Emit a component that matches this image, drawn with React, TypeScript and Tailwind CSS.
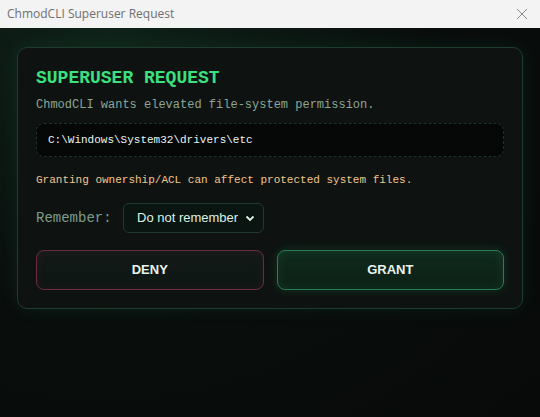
import React from "react";

export default function App() {
  const mono = { fontFamily: '"Liberation Mono", "DejaVu Sans Mono", monospace' };
  return (
    <div className="w-[540px] h-[417px] flex flex-col overflow-hidden" style={{ fontFamily: '"Liberation Sans", Arial, sans-serif' }}>
      <div className="h-[28px] bg-[#f3f3f3] flex items-center justify-between pl-[7px] pr-[10px] shrink-0">
        <span className="text-[12px] text-[#6f6f6f]" style={{ fontFamily: '"Open Sans", "Liberation Sans", sans-serif' }}>ChmodCLI Superuser Request</span>
        <svg width="12" height="12" viewBox="0 0 12 12" className="mr-[2px]">
          <path d="M1 1 L11 11 M11 1 L1 11" stroke="#8a8a8a" strokeWidth="1" />
        </svg>
      </div>
      <div className="flex-1 bg-[radial-gradient(ellipse_at_20%_0%,#0f2219_0%,#090d0c_55%,#070a09_100%)] pt-[19px] px-[17px]">
        <div className="rounded-[10px] border border-[#1d3d2e] bg-[#0e1311] shadow-[0_0_18px_rgba(40,160,100,0.12)] p-[18px] flex flex-col">
          <div className="text-[18px] leading-[24px] font-bold text-[#3ce07f]" style={mono}>SUPERUSER REQUEST</div>
          <div className="mt-[6px] text-[12px] leading-[18px] text-[#8da597]" style={mono}>ChmodCLI wants elevated file-system permission.</div>
          <div className="mt-[9px] h-[34px] rounded-[8px] border border-dashed border-[#1c3327] bg-[#050807] flex items-center pl-[11px]">
            <span className="text-[11px] text-[#eaf5ef]" style={mono}>C:\Windows\System32\drivers\etc</span>
          </div>
          <div className="mt-[14px] text-[11px] leading-[19px] text-[#f2c48d]" style={mono}>Granting ownership/ACL can affect protected system files.</div>
          <div className="mt-[13px] flex items-center gap-[9px]">
            <span className="text-[14px] text-[#7d9c8c] w-[78px]" style={mono}>Remember:</span>
            <div className="w-[141px] h-[30px] rounded-[6px] border border-[#1f3a2c] bg-[#0a1410] flex items-center justify-between pl-[13px] pr-[8px]">
              <span className="text-[13px] text-[#dcf3e5]">Do not remember</span>
              <svg width="10" height="10" viewBox="0 0 10 10">
                <path d="M1.5 3.5 L5 7 L8.5 3.5" stroke="#dcf3e5" strokeWidth="1.8" fill="none" />
              </svg>
            </div>
          </div>
          <div className="mt-[17px] grid grid-cols-2 gap-[13px]">
            <button className="h-[40px] rounded-[8px] border border-[#6a2d3d] bg-[linear-gradient(180deg,#131a17_0%,#0e1613_100%)] shadow-[inset_0_0_10px_rgba(120,40,60,0.15)] text-[13px] font-bold text-[#e9f4ee]">DENY</button>
            <button className="h-[40px] rounded-[8px] border border-[#2a7d52] bg-[linear-gradient(180deg,#10291d_0%,#0c2016_100%)] shadow-[0_0_10px_rgba(50,200,120,0.18),inset_0_0_12px_rgba(60,200,120,0.12)] text-[13px] font-bold text-[#e9f4ee]">GRANT</button>
          </div>
        </div>
      </div>
    </div>
  );
}
